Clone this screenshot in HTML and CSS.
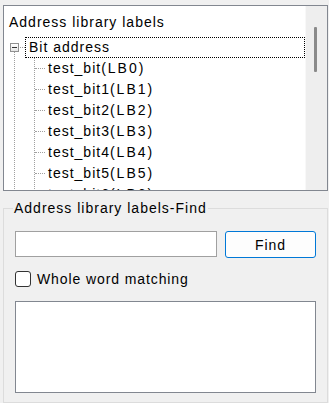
FILE: index.html
```html
<!DOCTYPE html>
<html lang="en">
<head>
    <meta charset="UTF-8">
    <meta name="viewport" content="width=device-width, initial-scale=1.0">
    <title>Address library labels</title>
    <link rel="stylesheet" href="styles.css">
</head>
<body>
    <div class="tree">
        <div class="tree-body">
            <div class="tree-title">Address library labels</div>
            <div class="root-row">
                <span class="expander"></span>
                <span class="hline root-hline"></span>
                <span class="label focus">Bit address</span>
            </div>
            <div class="trunk">
                <div class="kids">
                    <div class="row"><span class="hline"></span><span class="label">test_bit<span class="dev">(LB0)</span></span></div>
                    <div class="row"><span class="hline"></span><span class="label">test_bit1<span class="dev">(LB1)</span></span></div>
                    <div class="row"><span class="hline"></span><span class="label">test_bit2<span class="dev">(LB2)</span></span></div>
                    <div class="row"><span class="hline"></span><span class="label">test_bit3<span class="dev">(LB3)</span></span></div>
                    <div class="row"><span class="hline"></span><span class="label">test_bit4<span class="dev">(LB4)</span></span></div>
                    <div class="row"><span class="hline"></span><span class="label">test_bit5<span class="dev">(LB5)</span></span></div>
                    <div class="row"><span class="hline"></span><span class="label">test_bit6<span class="dev">(LB6)</span></span></div>
                </div>
            </div>
        </div>
        <div class="scrollbar">
            <div class="thumb"></div>
        </div>
    </div>

    <fieldset class="find-group">
        <legend>Address library labels-Find</legend>
        <div class="find-row">
            <input type="text" class="find-input">
            <button class="find-btn">Find</button>
        </div>
        <label class="check-row">
            <span class="checkbox"></span>
            <span>Whole word matching</span>
        </label>
        <div class="results"></div>
    </fieldset>
</body>
</html>
```

FILE: styles.css
```css
body {
    font-family: 'Liberation Sans', Arial, sans-serif;
    font-size: 14px;
    letter-spacing: 1px;
    background-color: #f0f0f0;
    margin: 0;
    padding: 0;
    color: #000;
}
.tree {
    display: flex;
    width: 325px;
    height: 186px;
    margin: 5px 0 0 3px;
    border: 1px solid #828790;
    box-sizing: border-box;
}
.tree-body {
    flex: 1;
    background: white;
    overflow: hidden;
    line-height: 21px;
}
.tree-title {
    padding: 6px 0 4px 5px;
    height: 21px;
}
.root-row {
    display: flex;
    align-items: center;
    height: 21px;
}
.expander {
    position: relative;
    width: 9px;
    height: 9px;
    margin-left: 6px;
    box-sizing: border-box;
    border: 1px solid #919191;
    background: linear-gradient(#fff, #e6e6e6);
}
.expander::before {
    content: "";
    position: absolute;
    left: 1px;
    top: 3px;
    width: 5px;
    height: 1px;
    background: #333;
}
.expander::after {
    content: "";
    position: absolute;
    left: 3px;
    top: 8px;
    height: 7px;
    border-left: 1px dotted #a0a0a0;
}
.hline {
    width: 10px;
    border-top: 1px dotted #a0a0a0;
}
.root-hline {
    width: 5px;
    margin-left: 1px;
}
.label {
    padding: 0 3px;
    white-space: nowrap;
}
.dev {
    letter-spacing: 2px;
}
.focus {
    flex: 1;
    border: 1px dotted #000;
    height: 19px;
    line-height: 19px;
}
.trunk {
    margin-left: 10px;
    border-left: 1px dotted #a0a0a0;
}
.kids {
    margin-left: 19px;
    border-left: 1px dotted #a0a0a0;
}
.row {
    display: flex;
    align-items: center;
    height: 21px;
}
.scrollbar {
    width: 21px;
    background: #eeeeee;
    border-left: 1px solid #f8f8f8;
}
.thumb {
    width: 3px;
    height: 45px;
    margin: 21px 0 0 8px;
    background: #8a8a8a;
    border-radius: 1px;
}
.find-group {
    width: 325px;
    height: 203px;
    box-sizing: border-box;
    margin: 9px 0 0 3px;
    padding: 15px 11px 0 11px;
    border: 1px solid #dcdcdc;
}
.find-group legend {
    padding: 0 1px;
    margin-left: -2px;
}
.find-row {
    display: flex;
    gap: 8px;
}
.find-input {
    width: 202px;
    height: 26px;
    box-sizing: border-box;
    border: 1px solid #a0a0a0;
    background: white;
    margin: 0;
}
.find-btn {
    width: 91px;
    height: 27px;
    box-sizing: border-box;
    border: 1px solid #0078d7;
    border-radius: 3px;
    background: #fdfdfd;
    font-family: inherit;
    font-size: inherit;
    letter-spacing: inherit;
    color: #000;
    padding: 0;
}
.check-row {
    display: flex;
    align-items: center;
    gap: 6px;
    margin-top: 13px;
    letter-spacing: 0.9px;
}
.checkbox {
    width: 16px;
    height: 16px;
    box-sizing: border-box;
    border: 1px solid #333;
    border-radius: 3px;
    background: #fff;
}
.results {
    height: 92px;
    box-sizing: border-box;
    margin-top: 14px;
    border: 1px solid #828790;
    background: white;
}
```
